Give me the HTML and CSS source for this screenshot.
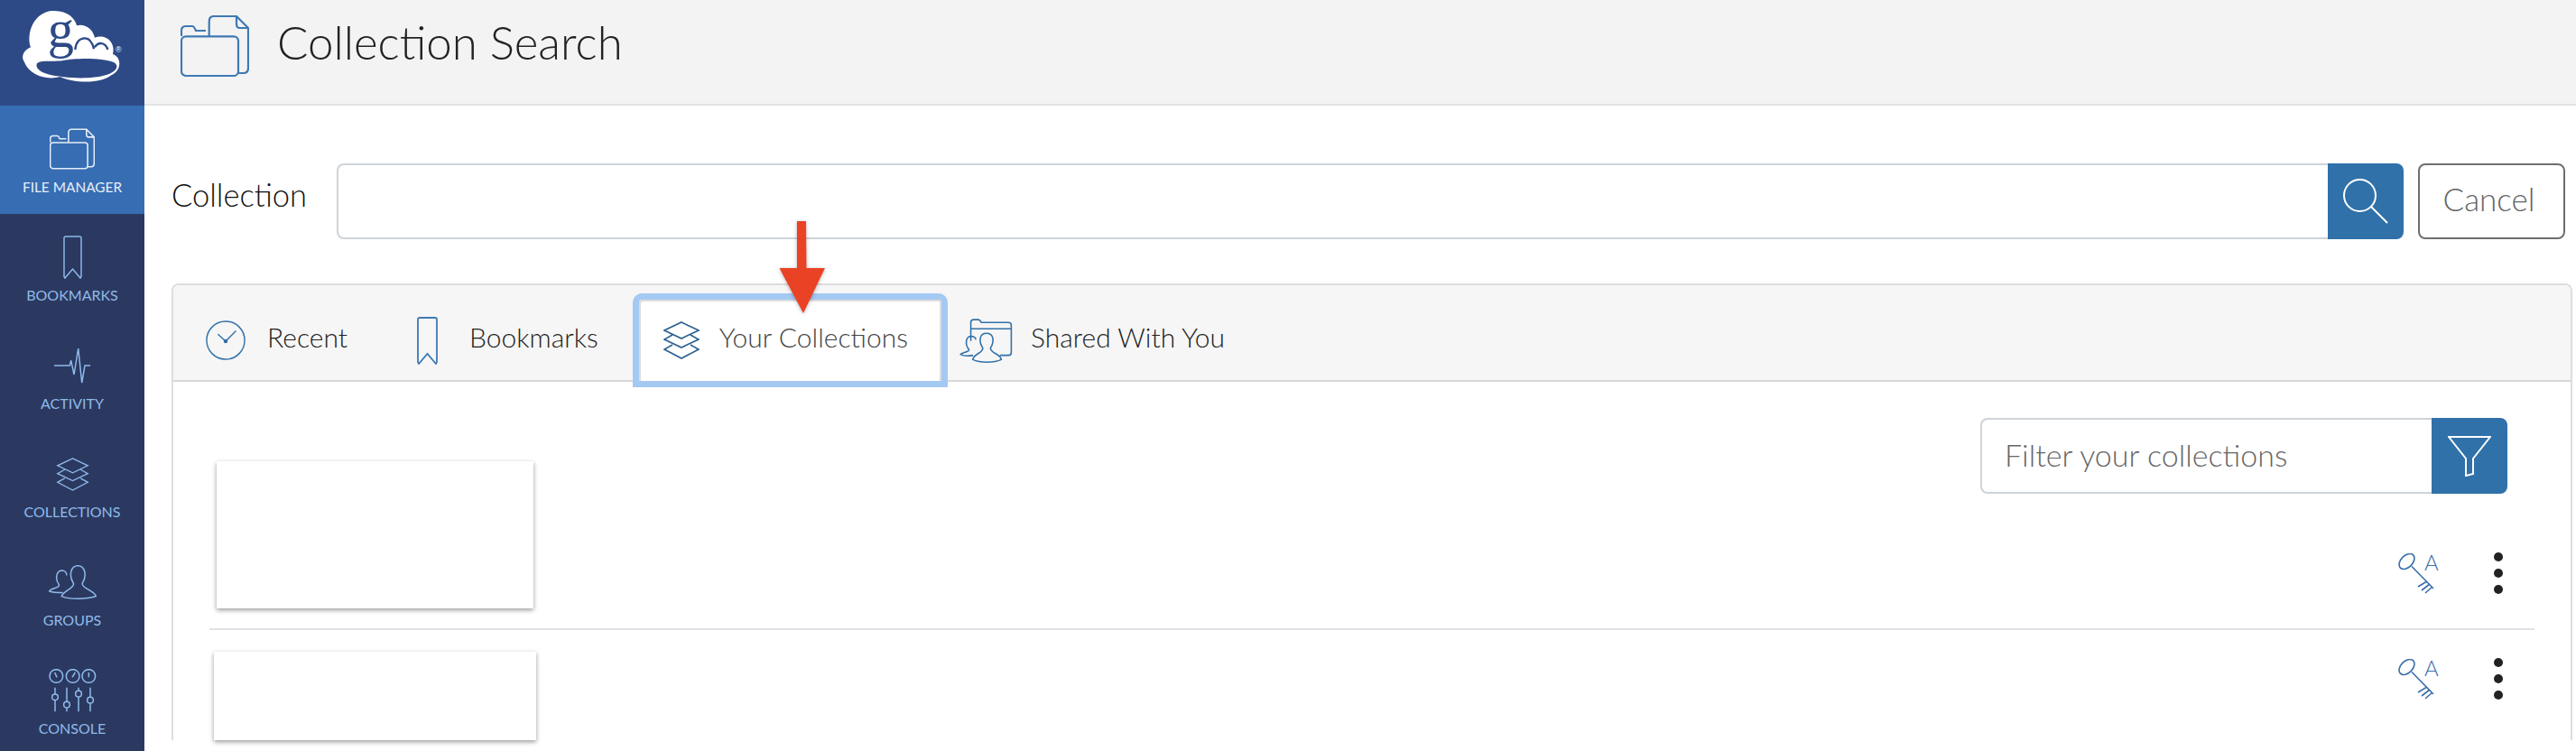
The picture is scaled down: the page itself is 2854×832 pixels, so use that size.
FILE: index.html
```html
<!DOCTYPE html>
<html lang="en">
<head>
    <meta charset="UTF-8">
    <meta name="viewport" content="width=device-width, initial-scale=1.0">
    <title>Collection Search</title>
    <link rel="stylesheet" href="styles.css">
</head>
<body>
    <svg class="sprite" xmlns="http://www.w3.org/2000/svg">
        <symbol id="i-files" viewBox="0 0 76 68">
            <rect x="1" y="23.3" width="63" height="43.7" rx="5"/>
            <path d="M1 23V17Q1 12 6 12H13Q15 12 17 17H28M31.7 23V7Q31.7 1 37 1H62L75 14V58Q75 64 70 64H64M62 1V10Q62 14 66 14H75"/>
        </symbol>
        <symbol id="i-bookmark" viewBox="0 0 23 53">
            <path d="M1 3Q1 1 3 1H20Q22 1 22 3V50L21 52L11.5 41L2 52L1 50Z"/>
        </symbol>
        <symbol id="i-activity" viewBox="0 0 40 40">
            <path d="M0 20H17.3L18.7 14.3L22 30L26.7 1L30.7 39L34 20H40"/>
        </symbol>
        <symbol id="i-layers" viewBox="0 0 40 42">
            <path d="M20 1L39 10L20 19L1 10ZM10 15L1 20L20 29L39 20L30 15M10 26L1 31L20 41L39 31L30 26"/>
        </symbol>
        <symbol id="i-groups" viewBox="25 15 160 120">
            <path d="M108 80C90 50 100 20 122 20C145 20 155 50 137 80C135 95 180 105 183 122C150 133 95 133 68 122C72 105 110 95 108 80Z"/>
            <path d="M60 85C45 65 50 38 68 36C80 36 85 45 85 52M60 85C60 95 30 95 27 105C40 110 60 110 72 110"/>
        </symbol>
        <symbol id="i-console" viewBox="0 0 159 144">
            <circle cx="25" cy="24" r="22"/>
            <circle cx="80" cy="24" r="22"/>
            <circle cx="133" cy="24" r="22"/>
            <path d="M20 12L27 28M88 12L78 28M133 12V28"/>
            <path d="M21 62V84M21 104V142M60 62V109M60 129V142M99 62V73M99 93V142M138 62V94M138 114V142"/>
            <circle cx="21" cy="94" r="10"/>
            <circle cx="60" cy="119" r="10"/>
            <circle cx="99" cy="83" r="10"/>
            <circle cx="138" cy="104" r="10"/>
        </symbol>
        <symbol id="i-clock" viewBox="0 0 46 46">
            <circle cx="23" cy="23" r="22"/>
            <path d="M14 16L23 24L35 12"/>
            <circle class="solid" cx="23" cy="24" r="1.6"/>
        </symbol>
        <symbol id="i-shared" viewBox="15 25 190 158">
            <path d="M58 105V40Q58 30 68 30H85Q90 30 95 40H190Q200 40 200 50V145Q200 155 190 155H160M58 62H200"/>
            <path class="fill-bg" d="M100 130C85 105 88 78 113 78C138 78 142 105 127 130C127 148 162 150 165 170C140 182 90 182 65 170C68 150 100 148 100 130Z"/>
            <path d="M52 135C38 120 38 90 58 88C68 88 74 92 76 100M52 135C52 145 25 145 22 152C32 158 50 158 66 155"/>
        </symbol>
        <symbol id="i-search" viewBox="0 0 50 50">
            <circle cx="18.5" cy="18.5" r="17.5"/>
            <path d="M31 31L49 49"/>
        </symbol>
        <symbol id="i-filter" viewBox="0 0 48 45">
            <path d="M1 1H47L28 25V42L20 44V25Z"/>
        </symbol>
        <symbol id="i-key" viewBox="0 0 47 45">
            <ellipse cx="9.5" cy="9" rx="10" ry="6.5" transform="rotate(-45 9.5 9)"/>
            <path d="M15 14.5L39 39M32 31L22 37M35 34L26 41M38 37L30 44"/>
            <text class="key-letter" x="29" y="19">A</text>
        </symbol>
    </svg>

    <nav class="sidebar">
        <div class="logo">
            <svg class="logo-mark" viewBox="0 0 360 285" xmlns="http://www.w3.org/2000/svg">
                <path class="cloud" d="M20 190C8 170 22 150 42 142C28 105 45 35 105 22C160 15 190 45 195 70C225 62 250 85 255 110C295 95 325 130 315 165C345 175 345 220 310 235C270 268 175 258 140 240C100 252 40 240 20 190Z"/>
                <path class="cloud-cut" d="M62 198C68 182 115 192 150 186C190 178 280 176 318 192C340 205 325 225 290 235C240 250 150 245 100 232C75 225 58 212 62 198Z"/>
                <path class="cloud-line" d="M190 150C192 125 205 112 222 112C238 112 247 125 252 148M255 142C265 125 290 122 298 150"/>
                <text class="logo-g" x="98" y="140">g</text>
                <text class="logo-reg" x="324" y="160">®</text>
            </svg>
        </div>
        <a class="nav-item nav-item-active">
            <span class="nav-icon"><svg class="ico ico-nav-files"><use href="#i-files"/></svg></span>
            <span class="nav-label">FILE MANAGER</span>
        </a>
        <a class="nav-item">
            <span class="nav-icon"><svg class="ico ico-nav-bookmark"><use href="#i-bookmark"/></svg></span>
            <span class="nav-label">BOOKMARKS</span>
        </a>
        <a class="nav-item">
            <span class="nav-icon"><svg class="ico ico-nav-activity"><use href="#i-activity"/></svg></span>
            <span class="nav-label">ACTIVITY</span>
        </a>
        <a class="nav-item">
            <span class="nav-icon"><svg class="ico ico-nav-layers"><use href="#i-layers"/></svg></span>
            <span class="nav-label">COLLECTIONS</span>
        </a>
        <a class="nav-item">
            <span class="nav-icon"><svg class="ico ico-nav-groups"><use href="#i-groups"/></svg></span>
            <span class="nav-label">GROUPS</span>
        </a>
        <a class="nav-item">
            <span class="nav-icon"><svg class="ico ico-nav-console"><use href="#i-console"/></svg></span>
            <span class="nav-label">CONSOLE</span>
        </a>
    </nav>

    <main class="main">
        <header class="page-header">
            <svg class="ico ico-title"><use href="#i-files"/></svg>
            <h1>Collection Search</h1>
        </header>

        <div class="search-row">
            <label class="search-label" for="collection">Collection</label>
            <input class="search-input" id="collection">
            <button class="btn-blue btn-search"><svg class="ico ico-search"><use href="#i-search"/></svg></button>
            <button class="btn-cancel">Cancel</button>
        </div>

        <section class="panel">
            <div class="tabs">
                <a class="tab tab-recent"><svg class="ico ico-clock"><use href="#i-clock"/></svg><span class="tab-text">Recent</span></a>
                <a class="tab tab-bookmarks"><svg class="ico ico-tab-bookmark"><use href="#i-bookmark"/></svg><span class="tab-text">Bookmarks</span></a>
                <a class="tab tab-active"><svg class="ico ico-tab-layers"><use href="#i-layers"/></svg><span class="tab-text">Your Collections</span></a>
                <a class="tab tab-shared"><svg class="ico ico-shared"><use href="#i-shared"/></svg><span class="tab-text">Shared With You</span></a>
            </div>

            <div class="filter-row">
                <input class="filter-input" placeholder="Filter your collections">
                <button class="btn-blue btn-filter"><svg class="ico ico-filter"><use href="#i-filter"/></svg></button>
            </div>

            <div class="rows">
                <div class="row row-first">
                    <div class="card"></div>
                    <div class="actions">
                        <svg class="ico ico-key"><use href="#i-key"/></svg>
                        <span class="dots"><i></i><i></i><i></i></span>
                    </div>
                </div>
                <div class="row row-second">
                    <div class="card"></div>
                    <div class="actions">
                        <svg class="ico ico-key"><use href="#i-key"/></svg>
                        <span class="dots"><i></i><i></i><i></i></span>
                    </div>
                </div>
            </div>
        </section>
    </main>

    <svg class="arrow" viewBox="0 0 56 106" xmlns="http://www.w3.org/2000/svg">
        <path d="M23 0H33L33.5 52H54L30 102L3.5 52H23Z"/>
    </svg>
</body>
</html>
```

FILE: styles.css
```css
* {
    box-sizing: border-box;
}

html,
body {
    height: 100%;
}

body {
    margin: 0;
    display: flex;
    position: relative;
    overflow: hidden;
    font-family: Lato, "Open Sans", sans-serif;
    color: #2b2b2b;
    background-color: white;
}

.sprite {
    display: none;
}

.ico {
    display: block;
    flex: none;
    fill: none;
    stroke: currentColor;
}

.solid {
    fill: currentColor;
}

.fill-bg {
    fill: #f6f6f6;
}

/* sidebar */
.sidebar {
    width: 160px;
    flex: none;
    background-color: #2b3960;
    color: #8fbaea;
}

.logo {
    height: 117px;
    padding-top: 5px;
    background-color: #2d4a87;
}

.logo-mark {
    display: block;
    width: 120px;
    height: 95px;
    margin-left: 20px;
    overflow: visible;
}

.cloud {
    fill: white;
}

.cloud-cut {
    fill: #2d4a87;
}

.cloud-line {
    fill: none;
    stroke: #2d4a87;
    stroke-width: 7;
}

.logo-g {
    font-family: "Liberation Serif", serif;
    font-size: 175px;
    fill: #2d4a87;
}

.logo-reg {
    font-family: "Liberation Sans", sans-serif;
    font-size: 26px;
    fill: white;
}

.nav-item {
    display: block;
    height: 120px;
    padding-top: 20px;
    text-align: center;
}

.nav-item-active {
    background-color: #366db3;
    color: #e6eef8;
}

.nav-icon {
    display: flex;
    height: 56px;
    justify-content: center;
    align-items: center;
}

.nav-label {
    display: block;
    margin-top: 4px;
    font-size: 16px;
    line-height: 20px;
}

.nav-item-active .nav-label {
    font-size: 15.4px;
}

.ico-nav-files {
    width: 50px;
    height: 46px;
    stroke-width: 2.4;
}

.ico-nav-bookmark {
    width: 21px;
    height: 48px;
    stroke-width: 1.6;
}

.ico-nav-activity {
    width: 40px;
    height: 40px;
    stroke-width: 1.5;
}

.ico-nav-layers {
    width: 37px;
    height: 37px;
    stroke-width: 1.5;
}

.ico-nav-groups {
    width: 53px;
    height: 40px;
    stroke-width: 4.5;
}

.ico-nav-console {
    width: 53px;
    height: 48px;
    stroke-width: 4.5;
}

/* main */
.main {
    flex: 1;
    min-width: 0;
}

.page-header {
    display: flex;
    align-items: center;
    height: 117px;
    padding-left: 40px;
    padding-bottom: 13px;
    background-color: #f3f3f3;
    border-bottom: 2px solid #e0e3e6;
}

.ico-title {
    width: 76px;
    height: 68px;
    margin-right: 31px;
    color: #3f79b5;
    stroke-width: 2.2;
}

.page-header h1 {
    margin: 0 0 10px;
    font-size: 51px;
    font-weight: 300;
    color: #222;
}

.search-row {
    display: flex;
    align-items: center;
    height: 84px;
    margin: 64px 12px 0 30px;
}

.search-label {
    width: 183px;
    flex: none;
    margin-bottom: 15px;
    font-size: 34.5px;
    font-weight: 300;
    color: #111;
}

.search-input {
    flex: 1;
    min-width: 0;
    height: 84px;
    border: 2px solid #ced4da;
    border-right: none;
    border-radius: 8px 0 0 8px;
}

.btn-blue {
    display: flex;
    flex: none;
    justify-content: center;
    align-items: center;
    width: 84px;
    height: 84px;
    padding: 0;
    border: none;
    border-radius: 0 8px 8px 0;
    background-color: #3071a9;
    color: white;
}

.ico-search {
    width: 50px;
    height: 50px;
    stroke-width: 2;
}

.btn-cancel {
    width: 163px;
    height: 84px;
    margin-left: 16px;
    padding: 0 6px 6px 0;
    border: 2px solid #6e6e6e;
    border-radius: 8px;
    background-color: white;
    color: #666;
    font-family: inherit;
    font-size: 35px;
    font-weight: 300;
}

.panel {
    margin: 49px 4px 0 30px;
    border: 2px solid #ddd;
    border-bottom: none;
    border-radius: 8px 8px 0 0;
}

.tabs {
    display: flex;
    height: 107px;
    background-color: #f6f6f6;
    border-bottom: 2px solid #d8d8d8;
    border-radius: 6px 6px 0 0;
}

.tab {
    display: flex;
    align-items: center;
    gap: 24px;
    height: 105px;
    padding: 17px 38px 0;
    font-size: 30px;
    font-weight: 300;
    color: #222;
}

.tab-text {
    margin-bottom: 9px;
}

.tab-recent {
    padding-left: 36px;
}

.tab-bookmarks {
    gap: 35px;
    padding-left: 39px;
}

.tab-active {
    gap: 22px;
    height: 104px;
    margin-top: 9px;
    padding: 0 37px 0 27px;
    background-color: white;
    border: 7px solid #a4c9f3;
    border-radius: 10px 10px 0 0;
    box-shadow: inset 2px 2px 0 #ddd, inset -2px 0 0 #ddd;
    color: #444;
}

.tab-shared {
    gap: 20px;
    padding-left: 12px;
}

.ico-clock {
    width: 44px;
    height: 44px;
    color: #3071a9;
    stroke-width: 1.5;
}

.ico-tab-bookmark {
    width: 23px;
    height: 53px;
    color: #3f79b5;
    stroke-width: 1.8;
}

.ico-tab-layers {
    width: 40px;
    height: 42px;
    color: #2c6091;
    stroke-width: 1.6;
}

.ico-shared {
    width: 60px;
    height: 51px;
    color: #3071a9;
    stroke-width: 5;
}

.filter-row {
    display: flex;
    justify-content: flex-end;
    margin-top: 40px;
    padding-right: 70px;
}

.filter-input {
    width: 500px;
    height: 84px;
    padding: 0 0 4px 25px;
    border: 2px solid #ced4da;
    border-right: none;
    border-radius: 8px 0 0 8px;
    font-family: inherit;
    font-size: 34px;
    font-weight: 300;
}

.filter-input::placeholder {
    color: #666;
    opacity: 1;
}

.ico-filter {
    width: 48px;
    height: 45px;
    stroke-width: 2;
}

.rows {
    margin: -36px 40px 0 40px;
}

.row {
    display: flex;
    justify-content: space-between;
    align-items: flex-start;
}

.row-first {
    padding-bottom: 22px;
    border-bottom: 2px solid #dfe2e6;
}

.row-second {
    padding-top: 24px;
}

.card {
    background-color: white;
    box-shadow: 0 2px 5px rgba(0, 0, 0, 0.4);
}

.row-first .card {
    width: 351px;
    height: 163px;
    margin-left: 8px;
}

.row-second .card {
    width: 357px;
    height: 98px;
    margin-left: 5px;
}

.actions {
    display: flex;
    align-items: center;
    gap: 59px;
    padding-right: 35px;
}

.row-first .actions {
    margin-top: 101px;
}

.row-second .actions {
    margin-top: 7px;
}

.ico-key {
    width: 47px;
    height: 45px;
    color: #3a6ea8;
    stroke-width: 1.6;
}

.key-letter {
    font-family: Lato, sans-serif;
    font-size: 24px;
    font-weight: 300;
    fill: #3a6ea8;
    stroke: none;
}

.dots {
    display: flex;
    flex-direction: column;
    gap: 8px;
}

.dots i {
    display: block;
    width: 10px;
    height: 10px;
    border-radius: 50%;
    background-color: #222;
}

/* annotation over the tabs */
.arrow {
    position: absolute;
    left: 860px;
    top: 245px;
    width: 56px;
    height: 106px;
    fill: #ea4224;
    filter: drop-shadow(0 1px 2px rgba(0, 0, 0, 0.3));
}
```
